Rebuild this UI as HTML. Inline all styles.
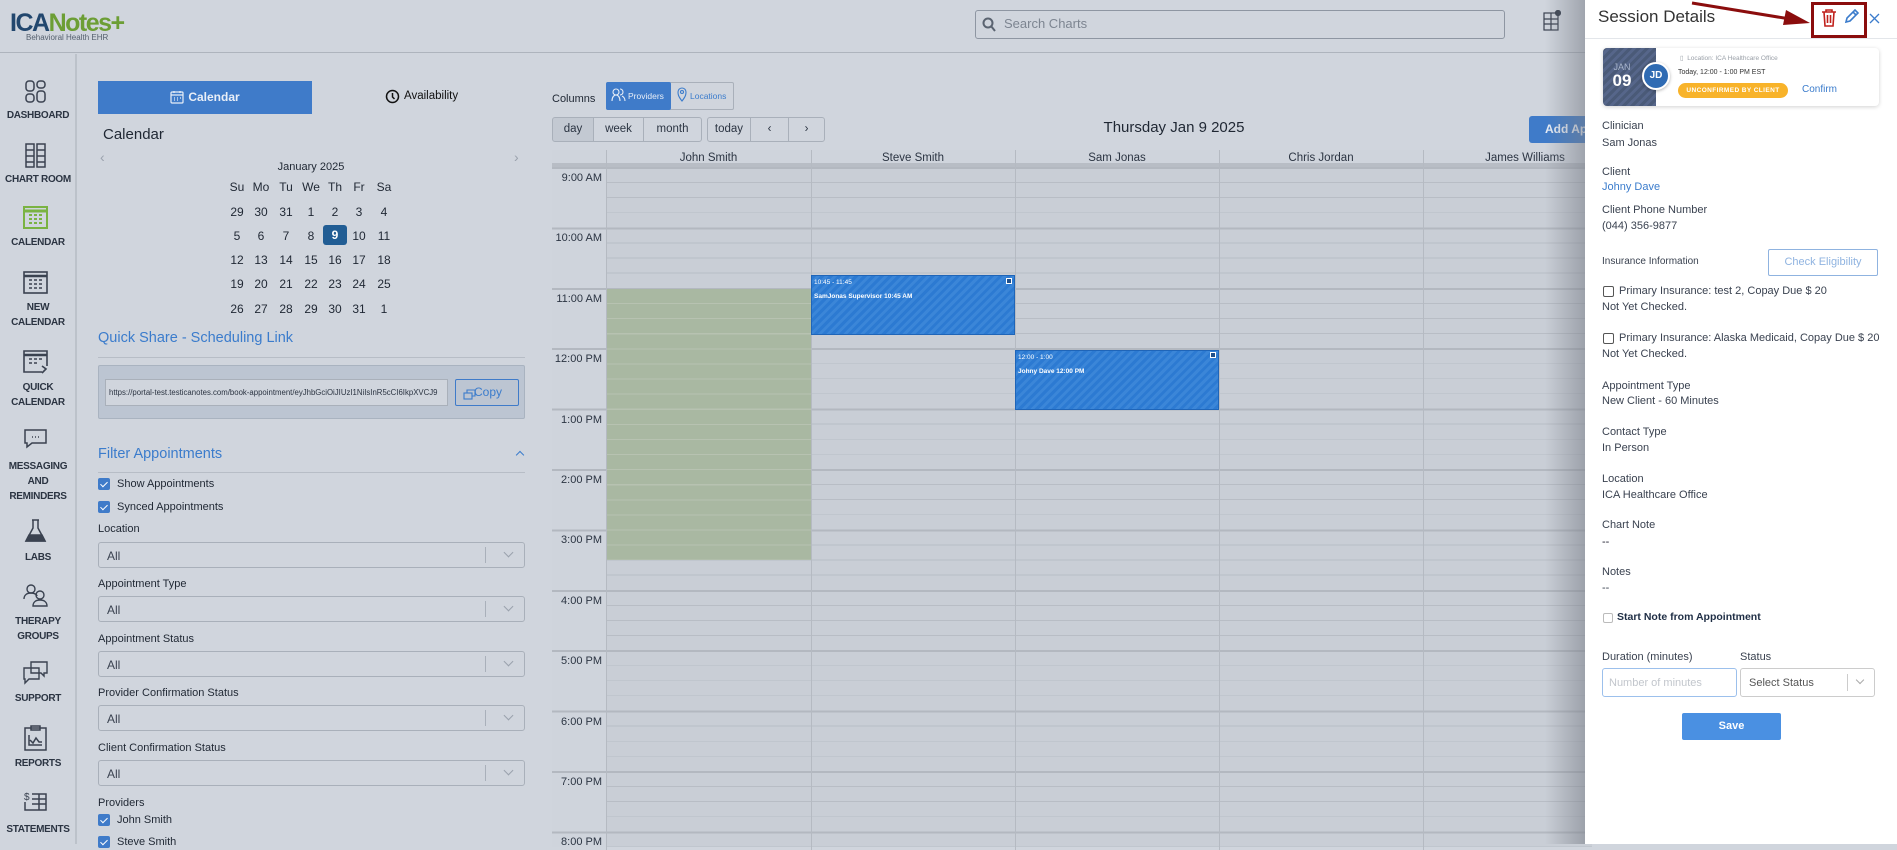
<!DOCTYPE html>
<html><head><meta charset="utf-8"><style>
*{box-sizing:border-box;margin:0;padding:0}
body{width:1897px;height:844px;overflow:hidden;background:#d0d5dd;font-family:"Liberation Sans",sans-serif;color:#1f2733;position:relative}
.a{position:absolute}
.sb{font-size:10px;font-weight:bold;color:#2b3442;text-align:center;width:76px;left:0;line-height:15px;letter-spacing:-0.3px}
.ico{left:22px;width:27px;height:27px}
.lbl{font-size:12px;color:#1f2733}
.sel{left:98px;width:427px;height:26px;border:1px solid #a9b0ba;border-radius:3px;font-size:12px;color:#3a4250;padding:6px 8px}
.sel:after{content:"";position:absolute;right:38px;top:4px;height:16px;border-left:1px solid #a9b0ba}
.sel i{position:absolute;right:12px;top:6px;width:7px;height:7px;border-right:1.3px solid #9aa2ad;border-bottom:1.3px solid #9aa2ad;transform:rotate(45deg)}
.cb{width:12px;height:12px;background:#3f7bc9;border-radius:2px}
.cb:after{content:"";position:absolute;left:4px;top:2px;width:3px;height:6px;border-right:1.3px solid #fff;border-bottom:1.3px solid #fff;transform:rotate(45deg)}
.day{font-size:12px;width:24px;text-align:center}
.tl{font-size:11px;color:#2b3442;width:52px;text-align:right}
.ch{font-size:11.5px;color:#2b3442;text-align:center;top:150px;height:17px;line-height:17px}
.ev{background:repeating-linear-gradient(135deg,#2c7ad2 0 3px,#3b86d8 3px 6px);border:1px solid #1f65b8;color:#fff;font-size:6.5px;padding:3px 2px}
.pf{font-size:11px;color:#3a4250}
.pv{font-size:11px;color:#3a4250}
.tb{border:1px solid #a9b0ba;font-size:11.5px;color:#2b3442;text-align:center;line-height:23px;height:25px}
</style></head><body>

<!-- header -->
<div class="a" style="left:0;top:0;width:1897px;height:53px;border-bottom:1px solid #aeb4bd"></div>
<div class="a" style="left:10px;top:10px;font-size:25px;font-weight:bold;letter-spacing:-1.5px;line-height:26px"><span style="color:#22476e">ICA</span><span style="color:#6c9e35">Notes</span><span style="color:#6c9e35">+</span></div>
<div class="a" style="left:26px;top:33px;font-size:8px;color:#55606e">Behavioral Health EHR</div>
<div class="a" style="left:975px;top:10px;width:530px;height:29px;border:1px solid #8e96a2;border-radius:3px"></div>
<svg class="a" style="left:982px;top:17px" width="14" height="15"><circle cx="6" cy="6" r="4.5" fill="none" stroke="#5a6370" stroke-width="2"/><path d="M9 9l4 5" stroke="#5a6370" stroke-width="2"/></svg>
<div class="a" style="left:1004px;top:16px;font-size:13px;color:#7d8591">Search Charts</div>
<svg class="a" style="left:1543px;top:10px" width="18" height="22" fill="none" stroke="#3a4250" stroke-width="1.2"><rect x="1" y="3" width="14" height="17"/><path d="M1 9h14M1 14h14M8 3v17"/><circle cx="15" cy="3" r="2.5" fill="#3a4250"/></svg>

<!-- sidebar -->
<div class="a" style="left:75px;top:54px;width:2px;height:790px;background:#bcc2ca"></div>
<svg class="a ico" style="top:78px" viewBox="0 0 27 27" fill="none" stroke="#3a4250" stroke-width="1.5"><rect x="4" y="3" width="8" height="10" rx="3"/><rect x="15" y="3" width="8" height="7" rx="3"/><rect x="4" y="16" width="8" height="8" rx="3"/><rect x="15" y="13" width="8" height="11" rx="3"/></svg>
<div class="a sb" style="top:108px">DASHBOARD</div>
<svg class="a ico" style="top:142px" viewBox="0 0 27 27" fill="none" stroke="#3a4250" stroke-width="1.5"><rect x="4" y="2" width="8" height="23"/><rect x="15" y="2" width="8" height="23"/><path d="M4 8h8M4 14h8M4 20h8M15 8h8M15 14h8M15 20h8"/></svg>
<div class="a sb" style="top:172px">CHART ROOM</div>
<svg class="a ico" style="top:204px" viewBox="0 0 27 27" fill="none" stroke="#7ab342" stroke-width="2"><rect x="2" y="3" width="23" height="21"/><path d="M2 7h23" stroke-width="3"/><path d="M7 11h3M12 11h3M17 11h3M7 15h3M12 15h3M17 15h3M7 19h3M12 19h3M17 19h3" stroke-width="2"/></svg>
<div class="a sb" style="top:235px">CALENDAR</div>
<svg class="a ico" style="top:269px" viewBox="0 0 27 27" fill="none" stroke="#3a4250" stroke-width="1.6"><rect x="2" y="3" width="23" height="21"/><path d="M2 7h23" stroke-width="2.5"/><path d="M7 11h3M12 11h3M17 11h3M7 15h3M12 15h3M17 15h3M7 19h3M12 19h3M17 19h3"/></svg>
<div class="a sb" style="top:300px">NEW<br>CALENDAR</div>
<svg class="a ico" style="top:348px" viewBox="0 0 27 27" fill="none" stroke="#3a4250" stroke-width="1.6"><path d="M20 24H2V3h23v15"/><path d="M2 7h23" stroke-width="2.5"/><path d="M7 11h3M12 11h3M17 11h3M7 15h3M12 15h3M20 18l4 3-4 4"/></svg>
<div class="a sb" style="top:380px">QUICK<br>CALENDAR</div>
<svg class="a ico" style="top:426px" viewBox="0 0 27 27" fill="none" stroke="#3a4250" stroke-width="1.5"><path d="M3 4h21v13H10l-5 4v-4H3z"/><path d="M10 11h1M13 11h1M16 11h1"/></svg>
<div class="a sb" style="top:459px">MESSAGING<br>AND<br>REMINDERS</div>
<svg class="a ico" style="top:518px" viewBox="0 0 27 27" fill="none" stroke="#3a4250" stroke-width="1.5"><path d="M10 2h7M11 2v8L4 23h19L16 10V2"/><path d="M7 17h13l3 6H4z" fill="#3a4250"/></svg>
<div class="a sb" style="top:550px">LABS</div>
<svg class="a ico" style="top:582px" viewBox="0 0 27 27" fill="none" stroke="#3a4250" stroke-width="1.4"><circle cx="9" cy="7" r="4"/><path d="M2 17c0-4 3-6 7-6s6 2 6 3"/><circle cx="18" cy="13" r="4"/><path d="M11 24c0-4 3-6 7-6s7 2 7 6z"/></svg>
<div class="a sb" style="top:614px">THERAPY<br>GROUPS</div>
<svg class="a ico" style="top:659px" viewBox="0 0 27 27" fill="none" stroke="#3a4250" stroke-width="1.4"><path d="M9 3h16v11h-3v3l-3-3H9z"/><path d="M2 9h15v11H7l-4 4v-4H2z"/></svg>
<div class="a sb" style="top:691px">SUPPORT</div>
<svg class="a ico" style="top:724px" viewBox="0 0 27 27" fill="none" stroke="#3a4250" stroke-width="1.5"><rect x="3" y="4" width="21" height="22"/><rect x="9" y="2" width="9" height="4"/><path d="M7 11v10h13M8 16l3 3 3-5 3 4h3"/></svg>
<div class="a sb" style="top:756px">REPORTS</div>
<svg class="a ico" style="top:788px" viewBox="0 0 27 27" fill="none" stroke="#3a4250" stroke-width="1.5"><path d="M10 6h14v16H3v-8M10 11h14M10 16h14M17 6v16"/><text x="2" y="12" font-size="10" fill="#3a4250" stroke="none" font-family="Liberation Sans">$</text></svg>
<div class="a sb" style="top:822px">STATEMENTS</div>

<!-- left panel -->
<div class="a" style="left:98px;top:81px;width:214px;height:33px;background:#3f7bc9;color:#e8eef7;font-size:12px;font-weight:bold;text-align:center;line-height:33px">
<svg style="vertical-align:-3px;margin-right:4px" width="14" height="14" fill="none" stroke="#e8eef7" stroke-width="1.2"><rect x="1" y="2" width="12" height="11" rx="1"/><path d="M1 5h12M4 1v2M10 1v2M4 8h1M7 8h1M10 8h1M4 10h1M7 10h1"/></svg>Calendar</div>
<svg class="a" style="left:385px;top:89px" width="15" height="15" fill="none" stroke="#111" stroke-width="1.5"><circle cx="7.5" cy="7.5" r="6"/><path d="M7.5 4v4l2 2"/></svg>
<div class="a" style="left:404px;top:90px;font-size:11.5px;color:#111">Availability</div>
<div class="a" style="left:103px;top:126px;font-size:15px;color:#1f2733">Calendar</div>
<div class="a" style="left:100px;top:149px;font-size:14px;color:#9aa2ad">‹</div>
<div class="a" style="left:514px;top:149px;font-size:14px;color:#9aa2ad">›</div>
<div class="a" style="left:250px;top:161px;width:122px;text-align:center;font-size:11px">January 2025</div>
<div id="mc"></div>
<div class="a" style="left:98px;top:330px;font-size:14.5px;color:#3b7ccc">Quick Share - Scheduling Link</div>
<div class="a" style="left:98px;top:357px;width:427px;height:1px;background:#b7bdc6"></div>
<div class="a" style="left:98px;top:365px;width:427px;height:54px;background:#bcc5d2;border:1px solid #a9b3c0;border-radius:2px"></div>
<div class="a" style="left:105px;top:379px;width:343px;height:27px;background:#d0d5dd;border:1px solid #a9b0ba;font-size:7.8px;padding:8px 3px;white-space:nowrap;overflow:hidden;color:#2b3442">https://portal-test.testicanotes.com/book-appointment/eyJhbGciOiJIUzI1NiIsInR5cCI6IkpXVCJ9</div>
<div class="a" style="left:455px;top:379px;width:64px;height:27px;border:1px solid #3f7bc9;border-radius:2px;color:#3b7ccc;font-size:12px;line-height:25px;padding-left:18px">Copy</div>
<svg class="a" style="left:463px;top:389px" width="13" height="11" fill="none" stroke="#3b7ccc" stroke-width="1.1"><rect x="1" y="4" width="8" height="6"/><path d="M4 4V1h8v6H9"/></svg>

<div class="a" style="left:98px;top:446px;font-size:14.5px;color:#3b7ccc">Filter Appointments</div>
<div class="a" style="left:517px;top:452px;width:6px;height:6px;border-left:1.5px solid #3b7ccc;border-top:1.5px solid #3b7ccc;transform:rotate(45deg)"></div>
<div class="a" style="left:98px;top:472px;width:427px;height:1px;background:#b7bdc6"></div>
<div class="a cb" style="left:98px;top:478px"></div><div class="a lbl" style="left:117px;top:478px;font-size:11px">Show Appointments</div>
<div class="a cb" style="left:98px;top:501px"></div><div class="a lbl" style="left:117px;top:501px;font-size:11px">Synced Appointments</div>
<div class="a lbl" style="left:98px;top:523px;font-size:11px">Location</div>
<div class="a sel" style="top:542px">All<i></i></div>
<div class="a lbl" style="left:98px;top:578px;font-size:11px">Appointment Type</div>
<div class="a sel" style="top:596px">All<i></i></div>
<div class="a lbl" style="left:98px;top:633px;font-size:11px">Appointment Status</div>
<div class="a sel" style="top:651px">All<i></i></div>
<div class="a lbl" style="left:98px;top:687px;font-size:11px">Provider Confirmation Status</div>
<div class="a sel" style="top:705px">All<i></i></div>
<div class="a lbl" style="left:98px;top:742px;font-size:11px">Client Confirmation Status</div>
<div class="a sel" style="top:760px">All<i></i></div>
<div class="a lbl" style="left:98px;top:797px;font-size:11px">Providers</div>
<div class="a cb" style="left:98px;top:814px"></div><div class="a lbl" style="left:117px;top:814px;font-size:11px">John Smith</div>
<div class="a cb" style="left:98px;top:836px"></div><div class="a lbl" style="left:117px;top:836px;font-size:11px">Steve Smith</div>

<!-- calendar controls -->
<div class="a" style="left:552px;top:93px;font-size:11px">Columns</div>
<div class="a" style="left:606px;top:82px;width:128px;height:28px;border:1px solid #a9b0ba;border-radius:2px"></div>
<div class="a" style="left:606px;top:82px;width:65px;height:28px;background:#3f7bc9;border-radius:2px;color:#e8eef7;font-size:8.5px;line-height:28px;padding-left:22px">Providers</div>
<svg class="a" style="left:611px;top:88px" width="15" height="14" fill="none" stroke="#e8eef7" stroke-width="1.1"><circle cx="5" cy="4" r="3"/><path d="M1 13c0-4 2-6 4-6s4 2 4 6M9 1a3 3 0 010 6M11 8c2 1 3 3 3 5"/></svg>
<svg class="a" style="left:677px;top:87px" width="10" height="15" fill="none" stroke="#3b7ccc" stroke-width="1.1"><path d="M5 14C1 9 1 7 1 5a4 4 0 018 0c0 2 0 4-4 9z"/><circle cx="5" cy="5" r="1.5"/></svg>
<div class="a" style="left:690px;top:91px;font-size:8.5px;color:#3b7ccc">Locations</div>
<div class="a tb" style="left:552px;top:117px;width:42px;background:#c3c9d2;border-radius:3px 0 0 3px">day</div>
<div class="a tb" style="left:593px;top:117px;width:51px">week</div>
<div class="a tb" style="left:643px;top:117px;width:59px;border-radius:0 3px 3px 0">month</div>
<div class="a tb" style="left:707px;top:117px;width:44px;border-radius:3px 0 0 3px">today</div>
<div class="a tb" style="left:750px;top:117px;width:39px">‹</div>
<div class="a tb" style="left:788px;top:117px;width:37px;border-radius:0 3px 3px 0">›</div>
<div class="a" style="left:1074px;top:119px;width:200px;text-align:center;font-size:15px">Thursday Jan 9 2025</div>
<div class="a" style="left:1529px;top:116px;width:120px;height:27px;background:#3f7bc9;border-radius:3px;color:#e8eef7;font-size:12px;font-weight:bold;line-height:27px;padding-left:16px;white-space:nowrap">Add Appointment</div>

<!-- grid -->
<div class="a" style="left:552px;top:150px;width:1040px;height:17px;background:#cfd4dc;border-bottom:4px solid #b8bdc5"></div>
<div class="a" style="left:552px;top:167px;width:1040px;height:680px;background:repeating-linear-gradient(to bottom,#b3b8c0 0 2px,#c9ced6 2px 15.1px,#b8bdc5 15.1px 16px,#c9ced6 16px 30.2px,#b8bdc5 30.2px 31px,#c9ced6 31px 45.3px,#b8bdc5 45.3px 46px,#c9ced6 46px 60.4px)"></div>
<div class="a" style="left:552px;top:167px;width:54px;height:680px;background:repeating-linear-gradient(to bottom,#b3b8c0 0 2px,#cfd4dc 2px 60.4px)"></div>
<div class="a" style="left:606px;top:289px;width:205px;height:271px;background:repeating-linear-gradient(to bottom,#a9b8a2 0 14px,#b7c2b1 14px 15.1px)"></div>
<div id="vl"></div>
<div class="a ch" style="left:606px;width:205px">John Smith</div>
<div class="a ch" style="left:811px;width:204px">Steve Smith</div>
<div class="a ch" style="left:1015px;width:204px">Sam Jonas</div>
<div class="a ch" style="left:1219px;width:204px">Chris Jordan</div>
<div class="a ch" style="left:1423px;width:204px">James Williams</div>
<div id="tl"></div>
<div class="a ev" style="left:811px;top:275px;width:204px;height:60px">10:45 - 11:45<br><br><b>SamJonas Supervisor 10:45 AM</b></div>
<div class="a ev" style="left:1015px;top:350px;width:204px;height:60px">12:00 - 1:00<br><br><b>Johny Dave 12:00 PM</b></div>
<div class="a" style="left:1006px;top:278px;width:6px;height:6px;border:1px solid #fff;background:#1f4f8a"></div>
<div class="a" style="left:1210px;top:352px;width:6px;height:6px;border:1px solid #fff;background:#1f4f8a"></div>
<div class="a" style="left:1545px;top:0;width:40px;height:844px;background:linear-gradient(to right,rgba(120,125,135,0),rgba(120,125,135,.55))"></div>

<!-- right panel -->
<div class="a" style="left:1585px;top:0;width:312px;height:844px;background:#fff"></div>
<div class="a" style="left:1598px;top:7px;font-size:17px;color:#333">Session Details</div>
<div class="a" style="left:1585px;top:38px;width:312px;height:1px;background:#e3e6ea"></div>
<div class="a" style="left:1811px;top:2px;width:56px;height:36px;border:3px solid #8b0d0d"></div>
<svg class="a" style="left:1821px;top:9px" width="16" height="18" fill="none" stroke="#c0201b" stroke-width="1.6"><path d="M1 3h14M5 3V1h6v2M3 3l1 14h8l1-14M6.5 6v8M9.5 6v8"/></svg>
<svg class="a" style="left:1844px;top:9px" width="15" height="15" fill="none" stroke="#3b7ccc" stroke-width="1.6"><path d="M2 13l1-4 8-8 3 3-8 8zM9 3l3 3"/></svg>
<svg class="a" style="left:1869px;top:13px" width="11" height="11" stroke="#3b7ccc" stroke-width="1.3"><path d="M1 1l9 9M10 1l-9 9"/></svg>
<svg class="a" style="left:1690px;top:0" width="125" height="30"><path d="M2 3L100 19" stroke="#8b0d0d" stroke-width="3"/><path d="M120 23L96 10l-3 15z" fill="#8b0d0d"/></svg>

<div class="a" style="left:1603px;top:48px;width:276px;height:58px;border-radius:4px;box-shadow:0 1px 4px rgba(0,0,0,.18)"></div>
<div class="a" style="left:1603px;top:48px;width:53px;height:58px;background:repeating-linear-gradient(135deg,#4a5a78 0 3px,#56668a 3px 6px);border-radius:4px 0 0 4px"></div>
<div class="a" style="left:1603px;top:62px;width:38px;text-align:center;font-size:9px;color:#a9b5cc">JAN</div>
<div class="a" style="left:1603px;top:71px;width:38px;text-align:center;font-size:17px;font-weight:bold;color:#fff">09</div>
<div class="a" style="left:1642px;top:62px;width:28px;height:28px;border-radius:50%;background:#2f6bb3;border:2px solid #fff;color:#fff;font-size:10px;font-weight:bold;text-align:center;line-height:24px;box-shadow:0 1px 3px rgba(0,0,0,.3)">JD</div>
<div class="a" style="left:1680px;top:54px;font-size:6.5px;color:#9aa0a8">▯&nbsp; Location: ICA Healthcare Office</div>
<div class="a" style="left:1678px;top:69px;font-size:7px;color:#333">Today, 12:00 - 1:00 PM EST</div>
<div class="a" style="left:1678px;top:83px;width:110px;height:15px;border-radius:8px;background:#f8b32a;color:#fff;font-size:6.5px;font-weight:bold;text-align:center;line-height:15px;letter-spacing:.4px">UNCONFIRMED BY CLIENT</div>
<div class="a" style="left:1802px;top:84px;font-size:10px;color:#3b7ccc">Confirm</div>

<div class="a pf" style="left:1602px;top:120px">Clinician</div><div class="a pv" style="left:1602px;top:137px">Sam Jonas</div>
<div class="a pf" style="left:1602px;top:166px">Client</div><div class="a pv" style="left:1602px;top:181px;color:#3b7ccc">Johny Dave</div>
<div class="a pf" style="left:1602px;top:204px">Client Phone Number</div><div class="a pv" style="left:1602px;top:220px">(044) 356-9877</div>
<div class="a pf" style="left:1602px;top:256px;font-size:10px">Insurance Information</div>
<div class="a" style="left:1768px;top:249px;width:110px;height:27px;border:1px solid #8fb3e0;border-radius:2px;color:#8fb3e0;font-size:11px;text-align:center;line-height:25px">Check Eligibility</div>
<div class="a" style="left:1603px;top:286px;width:11px;height:11px;border:1px solid #555;border-radius:2px"></div>
<div class="a pv" style="left:1619px;top:285px">Primary Insurance: test 2, Copay Due $ 20</div>
<div class="a pv" style="left:1602px;top:301px">Not Yet Checked.</div>
<div class="a" style="left:1603px;top:333px;width:11px;height:11px;border:1px solid #555;border-radius:2px"></div>
<div class="a pv" style="left:1619px;top:332px">Primary Insurance: Alaska Medicaid, Copay Due $ 20</div>
<div class="a pv" style="left:1602px;top:348px">Not Yet Checked.</div>
<div class="a pf" style="left:1602px;top:380px">Appointment Type</div><div class="a pv" style="left:1602px;top:395px">New Client - 60 Minutes</div>
<div class="a pf" style="left:1602px;top:426px">Contact Type</div><div class="a pv" style="left:1602px;top:442px">In Person</div>
<div class="a pf" style="left:1602px;top:473px">Location</div><div class="a pv" style="left:1602px;top:489px">ICA Healthcare Office</div>
<div class="a pf" style="left:1602px;top:519px">Chart Note</div><div class="a pv" style="left:1602px;top:536px;color:#223">--</div>
<div class="a pf" style="left:1602px;top:566px">Notes</div><div class="a pv" style="left:1602px;top:582px">--</div>
<div class="a" style="left:1603px;top:613px;width:10px;height:10px;border:1px solid #bbb;border-radius:2px"></div>
<div class="a" style="left:1617px;top:611px;font-size:10.5px;color:#1f2e45;font-weight:bold">Start Note from Appointment</div>
<div class="a pf" style="left:1602px;top:651px">Duration (minutes)</div>
<div class="a pf" style="left:1740px;top:651px">Status</div>
<div class="a" style="left:1602px;top:668px;width:135px;height:29px;border:1px solid #9cc0ec;border-radius:3px;font-size:11px;color:#c2c6cc;padding:8px 6px">Number of minutes</div>
<div class="a" style="left:1740px;top:668px;width:135px;height:29px;border:1px solid #ccc;border-radius:3px;font-size:11px;color:#555;padding:8px 8px">Select Status</div>
<div class="a" style="left:1847px;top:674px;height:17px;border-left:1px solid #ccc"></div>
<div class="a" style="left:1857px;top:677px;width:6px;height:6px;border-right:1px solid #aaa;border-bottom:1px solid #aaa;transform:rotate(45deg)"></div>
<div class="a" style="left:1682px;top:713px;width:99px;height:27px;background:#4a90e2;border-radius:2px;color:#fff;font-size:11px;font-weight:bold;text-align:center;line-height:27px">Save</div>

<script>
var h='';var rows=[["Su","Mo","Tu","We","Th","Fr","Sa"],[29,30,31,1,2,3,4],[5,6,7,8,9,10,11],[12,13,14,15,16,17,18],[19,20,21,22,23,24,25],[26,27,28,29,30,31,1]];
var ys=[180,205,229,253,277,302],xs=[237,261,286,311,335,359,384];
rows.forEach(function(r,i){r.forEach(function(d,j){var s='';if(d===9&&i===2)s='background:#215d94;color:#fff;font-weight:bold;border-radius:3px;height:20px;line-height:20px;top:'+(ys[i]-4)+'px;';h+='<div class="a day" style="left:'+(xs[j]-12)+'px;top:'+ys[i]+'px;'+s+'">'+d+'</div>';});});
document.getElementById('mc').outerHTML=h;
var v='';[606,811,1015,1219,1423].forEach(function(x){v+='<div class="a" style="left:'+x+'px;top:150px;width:1px;height:700px;background:#b5bac2"></div>';});
document.getElementById('vl').outerHTML=v;
var t='';["9:00 AM","10:00 AM","11:00 AM","12:00 PM","1:00 PM","2:00 PM","3:00 PM","4:00 PM","5:00 PM","6:00 PM","7:00 PM","8:00 PM"].forEach(function(s,i){t+='<div class="a tl" style="left:550px;top:'+(172+i*60.4)+'px">'+s+'</div>';});
document.getElementById('tl').outerHTML=t;
</script>
</body></html>
